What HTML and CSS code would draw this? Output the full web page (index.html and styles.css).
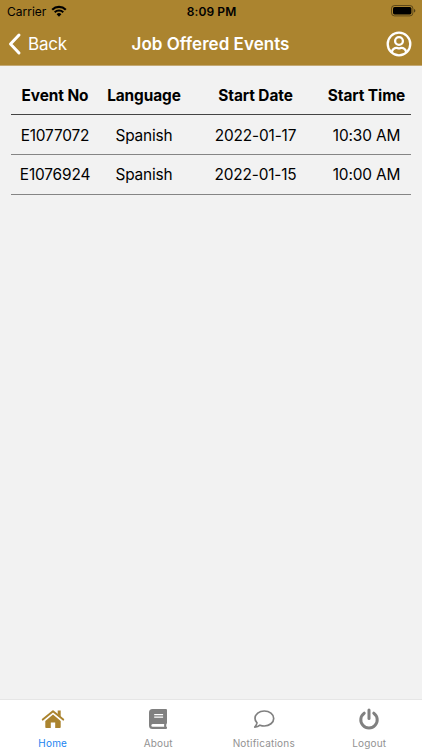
FILE: index.html
```
<!DOCTYPE html>
<html lang="en">
<head>
    <meta charset="UTF-8">
    <meta name="viewport" content="width=device-width, initial-scale=1.0">
    <title>Job Offered Events</title>
    <link rel="stylesheet" href="styles.css">
</head>
<body>

    <header class="header">
        <div class="status-bar">
            <div class="carrier">
                <span>Carrier</span>
                <svg class="wifi" viewBox="0 0 16 12">
                    <path d="M1.2 4.7a9.8 9.8 0 0 1 13.6 0" fill="none" stroke="#000" stroke-width="2.2"/>
                    <path d="M3.7 7.3a6.2 6.2 0 0 1 8.6 0" fill="none" stroke="#000" stroke-width="2"/>
                    <path d="M8 11.7L5.6 9.2a3.4 3.4 0 0 1 4.8 0z"/>
                </svg>
            </div>
            <div class="time">8:09 PM</div>
            <div class="battery-wrap">
                <svg class="battery" viewBox="0 0 25 12">
                    <rect x="0.5" y="0.5" width="21.4" height="10.4" rx="3" fill="none" stroke="#000" stroke-opacity="0.45"/>
                    <rect x="2" y="2" width="18.4" height="7.4" rx="1.6"/>
                    <path d="M23.1 4v3.6c.8-.3 1.2-1 1.2-1.8s-.4-1.5-1.2-1.8z" fill-opacity="0.6"/>
                </svg>
            </div>
        </div>
        <div class="nav-bar">
            <button class="back">
                <svg class="chevron" viewBox="0 0 13 22">
                    <path d="M11 2L2.5 11 11 20" fill="none" stroke="#fff" stroke-width="3" stroke-linecap="round" stroke-linejoin="round"/>
                </svg>
                <span>Back</span>
            </button>
            <h1 class="title">Job Offered Events</h1>
            <button class="profile">
                <svg viewBox="0 0 26 26" fill="none" stroke="#fff" stroke-width="2.3">
                    <circle cx="13" cy="13" r="11.3"/>
                    <circle cx="13" cy="10" r="3.9"/>
                    <path d="M5.8 20.8c1-2.8 2.7-3.9 4.7-3.9 1 0 1.4.5 2.5.5s1.5-.5 2.5-.5c2 0 3.7 1.1 4.7 3.9"/>
                </svg>
            </button>
        </div>
    </header>

    <main class="content">
        <table class="events">
            <colgroup>
                <col class="col-no">
                <col class="col-language">
                <col class="col-date">
                <col class="col-time">
            </colgroup>
            <thead>
                <tr><th>Event No</th><th>Language</th><th>Start Date</th><th>Start Time</th></tr>
            </thead>
            <tbody>
                <tr><td>E1077072</td><td>Spanish</td><td>2022-01-17</td><td>10:30 AM</td></tr>
                <tr><td>E1076924</td><td>Spanish</td><td>2022-01-15</td><td>10:00 AM</td></tr>
            </tbody>
        </table>
    </main>

    <nav class="tab-bar">
        <a class="tab active">
            <svg class="solid" viewBox="0 0 24 20">
                <path d="M16.7 1.4h3v6.5l-3-2.6z"/>
                <path class="roof" d="M1.8 10.6L12 2.2l10.2 8.4"/>
                <path d="M4.3 12L12 5.6l7.7 6.4v6.2q0 .8-.8.8h-4.7v-5.4H9.8V19H5.1q-.8 0-.8-.8z"/>
            </svg>
            <span>Home</span>
        </a>
        <a class="tab">
            <svg class="solid" viewBox="0 0 24 20">
                <path fill-rule="evenodd" d="M6.5 0H20q1 0 1 1v13q0 .6-.6.9-.3 1.4 0 2.8.6.2.6.9v.4q0 1-1 1H6.5Q3 20 3 16.5v-13Q3 0 6.5 0zM8.2 5v1.2h8.900V5zm0 2.500v1.200h8.900V7.500zM6.700 15q-1.400.1-1.400 1.400t1.400 1.400h11.500q-.2-1.400 0-2.800z"/>
            </svg>
            <span>About</span>
        </a>
        <a class="tab">
            <svg class="outline" viewBox="0 0 24 20">
                <path d="M12.3 2C7.2 2 3 5.2 3 9.3c0 1.8.8 3.4 2 4.6-.3 1.5-1 2.8-2.2 4.2 2 0 3.9-.7 5.2-1.9 1.3.5 2.8.8 4.3.8 5.2 0 9.4-3.4 9.4-7.6S17.5 2 12.3 2z"/>
            </svg>
            <span>Notifications</span>
        </a>
        <a class="tab">
            <svg class="outline power" viewBox="0 0 24 20">
                <path d="M7.2 4.2a8.2 8.2 0 1 0 9.6 0"/>
                <path d="M12 1v8.5"/>
            </svg>
            <span>Logout</span>
        </a>
    </nav>

</body>
</html>
```

FILE: styles.css
```
* {
    margin: 0;
    padding: 0;
    box-sizing: border-box;
    font-family: Inter, "Liberation Sans", sans-serif;
}

body {
    display: flex;
    flex-direction: column;
    height: 100vh;
    background-color: #f2f2f2;
    color: #000;
}

svg {
    display: block;
    overflow: visible;
}

button {
    border: none;
    background: none;
    cursor: pointer;
}

.header {
    height: 66px;
    background-color: #ab842f;
    border-bottom: 1px solid #c4a974;
}

.status-bar {
    display: grid;
    grid-template-columns: 1fr auto 1fr;
    align-items: center;
    height: 22px;
    padding: 0 6px 0 7px;
    font-size: 12px;
}

.carrier {
    display: flex;
    align-items: center;
    gap: 5px;
}

.wifi {
    width: 16px;
    height: 12px;
}

.time {
    font-weight: 600;
    letter-spacing: 0.1px;
}

.battery-wrap {
    display: flex;
    justify-content: flex-end;
}

.battery {
    width: 25px;
    height: 12px;
}

.nav-bar {
    display: grid;
    grid-template-columns: 1fr auto 1fr;
    align-items: center;
    height: 43px;
    padding: 0 10px 0 8px;
    color: #fff;
}

.back {
    display: flex;
    align-items: center;
    gap: 7px;
    color: #fff;
    font-size: 17px;
    letter-spacing: -0.2px;
}

.chevron {
    width: 13px;
    height: 22px;
}

.title {
    padding-left: 1px;
    font-size: 17px;
    font-weight: 600;
    letter-spacing: 0.04px;
}

.profile {
    justify-self: end;
}

.profile svg {
    width: 26px;
    height: 26px;
}

.content {
    flex: 1;
    padding: 9px 11px;
}

.events {
    width: 400px;
    table-layout: fixed;
    border-collapse: separate;
    border-spacing: 0;
    font-size: 15.4px;
    letter-spacing: -0.15px;
}

.col-no {
    width: 88px;
}

.col-language {
    width: 90px;
}

.col-date {
    width: 133px;
}

.col-time {
    width: 89px;
}

.events th,
.events td {
    height: 40px;
    text-align: center;
    white-space: nowrap;
    border-bottom: 1px solid #858585;
}

.events th {
    padding-top: 2px;
    font-weight: 700;
    letter-spacing: -0.08px;
    border-bottom-color: #444;
}

.events tbody tr:first-child td {
    padding-top: 2px;
}

.tab-bar {
    display: flex;
    height: 51px;
    background-color: #fff;
    border-top: 1px solid #e6e6e6;
}

.tab {
    flex: 1;
    display: flex;
    flex-direction: column;
    align-items: center;
    padding-top: 9px;
    color: #929292;
    font-size: 10px;
    letter-spacing: 0.2px;
}

.tab svg {
    width: 24px;
    height: 20px;
    margin-bottom: 8px;
}

.solid {
    fill: #808080;
}

.outline {
    fill: none;
    stroke: #808080;
    stroke-width: 1.7;
    stroke-linejoin: round;
}

.power {
    stroke-width: 3;
    stroke-linecap: round;
}

.roof {
    stroke: #ab842f;
    stroke-width: 2;
    stroke-linecap: round;
    stroke-linejoin: round;
}

.tab.active {
    color: #1a84f0;
}

.tab.active .solid {
    fill: #ab842f;
}

.tab.active .roof {
    fill: none;
}
```
